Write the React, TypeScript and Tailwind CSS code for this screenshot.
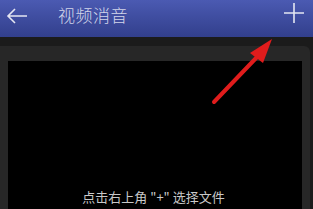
const App = () => {
  return (
    <div
      className="relative w-[313px] h-[209px] overflow-hidden flex flex-col bg-[#1b1b1b]"
      style={{ fontFamily: '"Noto Sans CJK SC", "Noto Sans", sans-serif' }}
    >
      {/* header */}
      <div className="h-[37px] shrink-0 flex items-center bg-gradient-to-b from-[#4b5ab2] to-[#323f8c]">
        <svg width="22" height="16" viewBox="0 0 22 16" className="ml-[6px] -mt-[6px]">
          <path d="M21 8H2M9 1L2 8l7 7" fill="none" stroke="#e4e6f2" strokeWidth="1.6" />
        </svg>
        <span className="ml-[30px] -mt-[7px] text-[17px] font-light text-[#d3d6ea] tracking-[0.5px]">视频消音</span>
        <svg width="22" height="22" viewBox="0 0 22 22" className="ml-auto mr-[8px] -mt-[11px]">
          <path d="M11 1v20M1 11h20" fill="none" stroke="#e4e6f2" strokeWidth="1.6" />
        </svg>
      </div>

      {/* body */}
      <div className="flex-1 flex flex-col pt-[9px] pr-[3px]">
        <div className="flex-1 flex flex-col bg-[#272727] rounded-tr-[6px] pt-[15px] px-[8px]">
          <div className="flex-1 bg-black flex flex-col justify-end items-center pb-[4px]">
            <span className="text-[13px] text-[#c9c9c9] leading-none mb-[2px] ml-[-3px]">点击右上角 "+" 选择文件</span>
          </div>
        </div>
      </div>

      {/* red annotation arrow */}
      <svg className="absolute left-0 top-0" width="313" height="209" viewBox="0 0 313 209">
        <path d="M214 102L258 56" stroke="#e01c1c" strokeWidth="4" strokeLinecap="round" />
        <path d="M272 39L250 53L263 63Z" fill="#e01c1c" />
      </svg>
    </div>
  );
};

export default App;
